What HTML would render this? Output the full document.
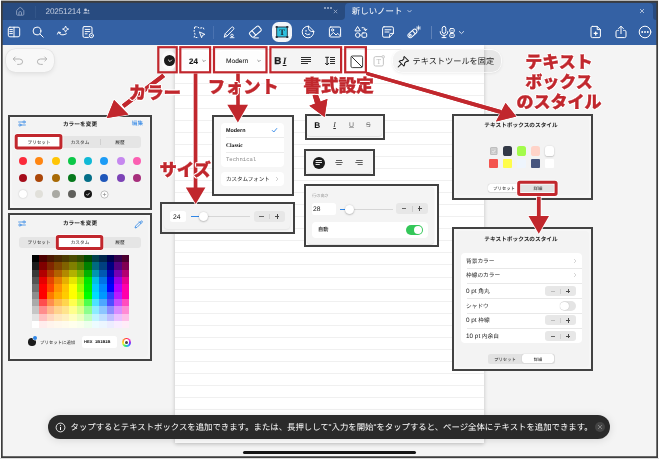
<!DOCTYPE html>
<html lang="ja"><head><meta charset="utf-8"><title>テキストツール</title>
<style>
html,body{margin:0;padding:0}
body{width:659px;height:459px;position:relative;overflow:hidden;background:#f2f2f2;font-family:"Liberation Sans","Noto Sans CJK JP",sans-serif;}
#L{position:absolute;left:0;top:0;width:659px;height:459px;will-change:transform}
#L>div,#L>svg{position:absolute;box-sizing:content-box}
.t{white-space:nowrap}
body{text-rendering:geometricPrecision}
</style></head><body><div id="L">
<div style="left:1px;top:0px;width:658px;height:1px;background:#b8b8b8;"></div>
<div style="left:0px;top:0px;width:1px;height:459px;background:#fbfbfb;"></div>
<div style="left:658px;top:0px;width:1px;height:459px;background:#fbfbfb;"></div>
<div style="left:2px;top:2px;width:655px;height:455px;background:#f4f4f4;"></div>
<div style="left:175px;top:45px;width:308.5px;height:397.6px;background:#fff;box-shadow:0 1px 4px rgba(0,0,0,.22);overflow:hidden;"><div style="position:absolute;left:0;top:38.4px;width:100%;height:1px;background:#f0f0f0"></div><div style="position:absolute;left:0;top:50.47px;width:100%;height:1px;background:#f0f0f0"></div><div style="position:absolute;left:0;top:62.54px;width:100%;height:1px;background:#f0f0f0"></div><div style="position:absolute;left:0;top:74.61px;width:100%;height:1px;background:#f0f0f0"></div><div style="position:absolute;left:0;top:86.68px;width:100%;height:1px;background:#f0f0f0"></div><div style="position:absolute;left:0;top:98.75px;width:100%;height:1px;background:#f0f0f0"></div><div style="position:absolute;left:0;top:110.82px;width:100%;height:1px;background:#f0f0f0"></div><div style="position:absolute;left:0;top:122.89px;width:100%;height:1px;background:#f0f0f0"></div><div style="position:absolute;left:0;top:134.96px;width:100%;height:1px;background:#f0f0f0"></div><div style="position:absolute;left:0;top:147.03px;width:100%;height:1px;background:#f0f0f0"></div><div style="position:absolute;left:0;top:159.1px;width:100%;height:1px;background:#f0f0f0"></div><div style="position:absolute;left:0;top:171.17px;width:100%;height:1px;background:#f0f0f0"></div><div style="position:absolute;left:0;top:183.24px;width:100%;height:1px;background:#f0f0f0"></div><div style="position:absolute;left:0;top:195.31px;width:100%;height:1px;background:#f0f0f0"></div><div style="position:absolute;left:0;top:207.38px;width:100%;height:1px;background:#f0f0f0"></div><div style="position:absolute;left:0;top:219.45px;width:100%;height:1px;background:#f0f0f0"></div><div style="position:absolute;left:0;top:231.52px;width:100%;height:1px;background:#f0f0f0"></div><div style="position:absolute;left:0;top:243.59px;width:100%;height:1px;background:#f0f0f0"></div><div style="position:absolute;left:0;top:255.66px;width:100%;height:1px;background:#f0f0f0"></div><div style="position:absolute;left:0;top:267.73px;width:100%;height:1px;background:#f0f0f0"></div><div style="position:absolute;left:0;top:279.8px;width:100%;height:1px;background:#f0f0f0"></div><div style="position:absolute;left:0;top:291.87px;width:100%;height:1px;background:#f0f0f0"></div><div style="position:absolute;left:0;top:303.94px;width:100%;height:1px;background:#f0f0f0"></div><div style="position:absolute;left:0;top:316.01px;width:100%;height:1px;background:#f0f0f0"></div><div style="position:absolute;left:0;top:328.08px;width:100%;height:1px;background:#f0f0f0"></div><div style="position:absolute;left:0;top:340.15px;width:100%;height:1px;background:#f0f0f0"></div><div style="position:absolute;left:0;top:352.22px;width:100%;height:1px;background:#f0f0f0"></div><div style="position:absolute;left:0;top:364.29px;width:100%;height:1px;background:#f0f0f0"></div><div style="position:absolute;left:0;top:376.36px;width:100%;height:1px;background:#f0f0f0"></div><div style="position:absolute;left:0;top:388.43px;width:100%;height:1px;background:#f0f0f0"></div></div>
<div style="left:175px;top:48.6px;width:308.5px;height:1px;background:#e9e9e9;"></div>
<div style="left:2px;top:2px;width:655px;height:18px;background:#284b80;"></div>
<div style="left:345px;top:3px;width:308px;height:20px;background:#3461a4;border-radius:4px 4px 0 0;"></div>
<div style="left:2px;top:20px;width:655px;height:25px;background:#3461a4;"></div>
<div style="left:341px;top:16px;width:4px;height:4px;background:#3461a4;"></div>
<div style="left:340px;top:15px;width:5px;height:5px;background:#284b80;border-radius:0 0 4px 0;"></div>
<div style="left:653px;top:16px;width:4px;height:4px;background:#3461a4;"></div>
<div style="left:653px;top:15px;width:4px;height:5px;background:#284b80;border-radius:0 0 0 3px;"></div>
<svg style="left:15px;top:5.8px;" width="11" height="11" viewBox="0 0 11 11"><path d="M1.6 4.9 Q1.6 4.3 2.1 3.9 L4.6 1.7 Q5.2 1.2 5.8 1.7 L8.3 3.9 Q8.8 4.3 8.8 4.9 V8.2 Q8.8 9.2 7.8 9.2 H2.6 Q1.6 9.2 1.6 8.2 Z M3.9 9.1 V6.6 Q3.9 5.6 5.2 5.6 Q6.5 5.6 6.5 6.6 V9.1" fill="none" stroke="#8fa1c2" stroke-width=".9" stroke-linejoin="round"/></svg>
<div style="left:35px;top:5.5px;width:1px;height:12px;background:#335689;"></div>
<div class="t" style="left:45.6px;top:6.06px;font-size:8.2px;line-height:11.48px;color:#c3cde0;letter-spacing:-.18px;">20251214</div>
<svg style="left:83.2px;top:8.4px;" width="6.8" height="6" viewBox="0 0 8 7"><circle cx="3" cy="2.2" r="1.6" fill="#c3cde0"/><path d="M0.3 6.5 C0.3 4.5 5.7 4.5 5.7 6.5 Z" fill="#c3cde0"/><circle cx="6.3" cy="3" r="1" fill="#c3cde0"/><path d="M5.6 6.5 C5.9 5 7.8 5 7.8 6.5Z" fill="#c3cde0"/></svg>
<div style="left:324.3px;top:7.4px;width:2px;height:2px;background:#a9b8d3;border-radius:50%;"></div>
<div style="left:327.2px;top:7.4px;width:2px;height:2px;background:#a9b8d3;border-radius:50%;"></div>
<div style="left:330.1px;top:7.4px;width:2px;height:2px;background:#a9b8d3;border-radius:50%;"></div>
<svg style="left:333px;top:8.5px;" width="5" height="5" viewBox="0 0 5 5"><path d="M0.8 0.8 L4.2 4.2 M4.2 0.8 L0.8 4.2" stroke="#9fb0cd" stroke-width=".8" fill="none"/></svg>
<div class="t" style="left:351.8px;top:6.19px;font-size:8.45px;line-height:11.83px;color:#fff;">新しいノート</div>
<svg style="left:405.8px;top:9.2px;" width="7" height="5" viewBox="0 0 7 5"><path d="M1.6 1.2 L3.5 3.1 L5.4 1.2" stroke="#c9d4e8" stroke-width=".9" fill="none"/></svg>
<svg style="left:639px;top:8px;" width="6" height="6" viewBox="0 0 6 6"><path d="M1 1 L5 5 M5 1 L1 5" stroke="#c9d4e8" stroke-width=".8" fill="none"/></svg>
<svg style="left:6.5px;top:25.3px;" width="14" height="14" viewBox="0 0 14 14"><rect x="1.3" y="2.2" width="11.4" height="9.6" rx="1.6" stroke="#fff" stroke-width="1" fill="none" stroke-linecap="round" stroke-linejoin="round"/><path d="M7 2.2 V11.8 M2.8 4.6 H5.4 M2.8 6.6 H5.4 M2.8 8.6 H5.4" stroke="#fff" stroke-width="1" fill="none" stroke-linecap="round" stroke-linejoin="round"/></svg>
<svg style="left:31.0px;top:25.3px;" width="14" height="14" viewBox="0 0 14 14"><circle cx="6" cy="6" r="3.9" stroke="#fff" stroke-width="1" fill="none" stroke-linecap="round" stroke-linejoin="round"/><path d="M9 9 L12.2 12.2" stroke="#fff" stroke-width="1" fill="none" stroke-linecap="round" stroke-linejoin="round"/></svg>
<svg style="left:56.0px;top:25.3px;" width="14" height="14" viewBox="0 0 14 14"><path d="M2.7 7.4 Q5 11.8 10.4 8.8" stroke="#fff" stroke-width="1" fill="none" stroke-linecap="round" stroke-linejoin="round"/><path d="M1.5 9.1 L2.5 6.9 L4.6 7.7" stroke="#fff" stroke-width="1" fill="none" stroke-linecap="round" stroke-linejoin="round"/><path d="M9.6 1 L10.5 3.2 L12.7 4.1 L10.5 5 L9.6 7.2 L8.7 5 L6.5 4.1 L8.7 3.2 Z" stroke="#fff" stroke-width=".85" fill="none" stroke-linejoin="round"/></svg>
<svg style="left:81.0px;top:25.3px;" width="14" height="14" viewBox="0 0 14 14"><path d="M3 1.6 H9.6 Q11 1.6 11 3 V7.6 M3 1.6 Q2 1.6 2 3 V11 Q2 12.4 3.4 12.4 H7.4" stroke="#fff" stroke-width="1" fill="none" stroke-linecap="round" stroke-linejoin="round"/><path d="M4.2 4.4 H8.8 M4.2 6.6 H8.8 M4.2 8.8 H6.2" stroke="#fff" stroke-width="1" fill="none" stroke-linecap="round" stroke-linejoin="round"/><circle cx="10.4" cy="10.6" r="2.1" stroke="#fff" stroke-width="1" fill="none" stroke-linecap="round" stroke-linejoin="round"/><circle cx="10.4" cy="10.6" r=".7" fill="#fff"/></svg>
<svg style="left:192px;top:25.3px;" width="14" height="14" viewBox="0 0 14 14"><path d="M2.7 2 L5.1 1.7 L7.5 3.2 L11.2 2.6 L12.4 5.2 M2.7 2 L2.1 6.2 L3 9.3 L2.1 12.3 L6.6 12.7" stroke="#fff" stroke-width="1" fill="none" stroke-dasharray="1.9 1.1" stroke-linejoin="round"/><path d="M7.4 6.9 L12.9 9.4 L10.5 10.3 L9.6 12.7 Z" stroke="#fff" stroke-width=".95" fill="none" stroke-linejoin="round"/></svg>
<div style="left:213.4px;top:25.5px;width:0.8px;height:13.5px;background:#4b73b1;"></div>
<svg style="left:221.5px;top:25.3px;" width="14" height="14" viewBox="0 0 14 14"><path d="M2.3 11.9 L3.2 8.7 L9.5 2.3 Q10.4 1.5 11.4 2.4 Q12.3 3.4 11.5 4.3 L5.1 10.9 Z" stroke="#fff" stroke-width="1" fill="none" stroke-linecap="round" stroke-linejoin="round"/><path d="M3.2 8.7 L5.1 10.9" stroke="#fff" stroke-width=".8" fill="none"/><circle cx="10" cy="10.4" r="1.25" stroke="#fff" stroke-width=".9" fill="none"/><path d="M8.2 12.7 H12" stroke="#fff" stroke-width=".9" fill="none" stroke-linecap="round"/></svg>
<svg style="left:248px;top:25px;" width="15" height="14" viewBox="0 0 15 14"><g transform="rotate(-40 7.3 6.6)"><rect x="1.3" y="3.7" width="12" height="5.9" rx="1.5" stroke="#fff" stroke-width="1" fill="none" stroke-linecap="round" stroke-linejoin="round"/><path d="M5.4 3.7 V9.6" stroke="#fff" stroke-width="1" fill="none" stroke-linecap="round" stroke-linejoin="round"/></g><path d="M6 12.9 H10.4" stroke="#fff" stroke-width="1" fill="none" stroke-linecap="round" stroke-linejoin="round"/></svg>
<div style="left:272.2px;top:21.9px;width:19.5px;height:20.5px;background:#f0f4f9;border-radius:6.5px;"></div>
<svg style="left:275.2px;top:25.3px;" width="14" height="14" viewBox="0 0 14 14"><rect x="1.7" y="2" width="10.6" height="10" fill="#2fc0de" stroke="#26303a" stroke-width=".9"/><g fill="#26303a"><rect x=".7" y="1" width="2" height="2"/><rect x="11.3" y="1" width="2" height="2"/><rect x=".7" y="11" width="2" height="2"/><rect x="11.3" y="11" width="2" height="2"/></g><text x="7" y="10.2" font-family="Liberation Serif,serif" font-weight="bold" font-size="8.6" text-anchor="middle" fill="#1d2730">T</text></svg>
<svg style="left:301.4px;top:25.2px;" width="14" height="14" viewBox="0 0 14 14"><path d="M7.4 1.2 A5.8 5.8 0 1 0 12.8 6.6 Z" stroke="#fff" stroke-width="1" fill="none" stroke-linecap="round" stroke-linejoin="round"/><path d="M7.4 1.2 Q6.6 7.4 12.8 6.6" stroke="#fff" stroke-width="1" fill="none" stroke-linecap="round" stroke-linejoin="round"/><path d="M4.3 8.5 Q6.2 10.7 8.8 9.2" stroke="#fff" stroke-width="1" fill="none" stroke-linecap="round" stroke-linejoin="round"/><path d="M4.6 5.9 H5.6" stroke="#fff" stroke-width="1" fill="none" stroke-linecap="round" stroke-linejoin="round"/></svg>
<svg style="left:328.0px;top:25.3px;" width="14" height="14" viewBox="0 0 14 14"><rect x="1.4" y="2" width="11.2" height="10" rx="1.4" stroke="#fff" stroke-width="1" fill="none" stroke-linecap="round" stroke-linejoin="round"/><circle cx="4.6" cy="5" r="1.1" stroke="#fff" stroke-width="1" fill="none" stroke-linecap="round" stroke-linejoin="round"/><path d="M1.8 11 L5.4 7.4 L8 10 L9.8 8.4 L12.4 11" stroke="#fff" stroke-width="1" fill="none" stroke-linecap="round" stroke-linejoin="round"/></svg>
<svg style="left:354.0px;top:25.3px;" width="14" height="14" viewBox="0 0 14 14"><path d="M3.8 1.8 L6.3 5.9 H1.3 Z" stroke="#fff" stroke-width="1" fill="none" stroke-linecap="round" stroke-linejoin="round"/><path d="M8 2.7 Q11.7 2 11.5 5.4 M10 4.2 L11.5 5.8 L12.9 4.2" stroke="#fff" stroke-width="1" fill="none" stroke-linecap="round" stroke-linejoin="round"/><circle cx="3.8" cy="10.1" r="2.3" stroke="#fff" stroke-width="1" fill="none" stroke-linecap="round" stroke-linejoin="round"/><rect x="7.9" y="7.9" width="4.8" height="4.4" rx="1.1" stroke="#fff" stroke-width="1" fill="none" stroke-linecap="round" stroke-linejoin="round"/></svg>
<svg style="left:381.0px;top:25.3px;" width="14" height="14" viewBox="0 0 14 14"><path d="M3 1.8 H11 Q12.4 1.8 12.4 3.2 V8.4 L8.6 12.2 H3 Q1.6 12.2 1.6 10.8 V3.2 Q1.6 1.8 3 1.8 Z" stroke="#fff" stroke-width="1" fill="none" stroke-linecap="round" stroke-linejoin="round"/><path d="M12.4 8.4 H9.8 Q8.6 8.4 8.6 9.6 V12.2" stroke="#fff" stroke-width="1" fill="none" stroke-linecap="round" stroke-linejoin="round"/><path d="M4 4.8 H10 M4 7 H8" stroke="#fff" stroke-width="1" fill="none" stroke-linecap="round" stroke-linejoin="round"/></svg>
<svg style="left:407.0px;top:25.3px;" width="14" height="14" viewBox="0 0 14 14"><g transform="rotate(-42 5.4 8.4)"><rect x=".2" y="6.2" width="10.4" height="4.4" rx="2.2" stroke="#fff" stroke-width="1" fill="none" stroke-linecap="round" stroke-linejoin="round"/><circle cx="2.6" cy="8.4" r=".9" stroke="#fff" stroke-width="1" fill="none" stroke-linecap="round" stroke-linejoin="round"/><path d="M7.2 6.4 V10.4" stroke="#fff" stroke-width="1" fill="none" stroke-linecap="round" stroke-linejoin="round"/></g><path d="M11.5 .9 V5.1 M9.4 3 H13.6 M10.1 1.6 L12.9 4.4 M12.9 1.6 L10.1 4.4" stroke="#fff" stroke-width=".7" fill="none" stroke-linecap="round"/></svg>
<div style="left:431px;top:25.5px;width:1px;height:13px;background:#5f82b8;"></div>
<svg style="left:437.0px;top:25.3px;" width="14" height="14" viewBox="0 0 14 14"><rect x="5.2" y="1.4" width="3.6" height="7" rx="1.8" stroke="#fff" stroke-width="1" fill="none" stroke-linecap="round" stroke-linejoin="round"/><path d="M3.2 6.6 Q3.2 10.4 7 10.4 Q10.8 10.4 10.8 6.6 M7 10.4 V12.6 M5 12.6 H9" stroke="#fff" stroke-width="1" fill="none" stroke-linecap="round" stroke-linejoin="round"/></svg>
<svg style="left:449.3px;top:27.5px;" width="6" height="10" viewBox="0 0 6 10"><rect x=".8" y=".6" width="4.4" height="3.8" rx="1" stroke="#fff" stroke-width="1" fill="none" stroke-linecap="round" stroke-linejoin="round"/><rect x=".8" y="5.6" width="4.4" height="3.8" rx="1" stroke="#fff" stroke-width="1" fill="none" stroke-linecap="round" stroke-linejoin="round"/><circle cx="3" cy="2.5" r=".6" fill="#fff"/><circle cx="3" cy="7.5" r=".6" fill="#fff"/></svg>
<svg style="left:458px;top:30.3px;" width="7" height="5" viewBox="0 0 7 5"><path d="M1 1.2 L3.5 3.6 L6 1.2" stroke="#dfe6f2" stroke-width=".9" fill="none"/></svg>
<svg style="left:589.0px;top:25.3px;" width="14" height="14" viewBox="0 0 14 14"><path d="M3.4 1.4 H8.2 L11.4 4.6 V11.2 Q11.4 12.6 10 12.6 H3.4 Q2 12.6 2 11.2 V2.8 Q2 1.4 3.4 1.4 Z" stroke="#fff" stroke-width="1" fill="none" stroke-linecap="round" stroke-linejoin="round"/><path d="M8.2 1.4 V4.6 H11.4" stroke="#fff" stroke-width="1" fill="none" stroke-linecap="round" stroke-linejoin="round"/><path d="M6.7 6.4 V10.4 M4.7 8.4 H8.7" stroke="#fff" stroke-width="1.3" fill="none"/></svg>
<svg style="left:613.5px;top:25.3px;" width="14" height="14" viewBox="0 0 14 14"><path d="M4.4 5.4 H3.4 Q2 5.4 2 6.8 V11.2 Q2 12.6 3.4 12.6 H10.6 Q12 12.6 12 11.2 V6.8 Q12 5.4 10.6 5.4 H9.6" stroke="#fff" stroke-width="1" fill="none" stroke-linecap="round" stroke-linejoin="round"/><path d="M7 8.6 V1.4 M4.6 3.6 L7 1.2 L9.4 3.6" stroke="#fff" stroke-width="1" fill="none" stroke-linecap="round" stroke-linejoin="round"/></svg>
<svg style="left:638.0px;top:25.3px;" width="14" height="14" viewBox="0 0 14 14"><circle cx="7" cy="7" r="5.8" stroke="#fff" stroke-width="1" fill="none" stroke-linecap="round" stroke-linejoin="round"/><circle cx="4.2" cy="7" r=".95" fill="#fff"/><circle cx="7" cy="7" r=".95" fill="#fff"/><circle cx="9.8" cy="7" r=".95" fill="#fff"/></svg>
<div style="left:5.8px;top:49px;width:48.5px;height:23.3px;background:#f8f8f8;border-radius:9.5px;box-shadow:0 0 0 .6px #e2e2e2,0 2px 5px rgba(0,0,0,.09);"></div>
<svg style="left:12px;top:55.3px;" width="12" height="11" viewBox="0 0 12 11"><path d="M3.2 2 L1.2 4 L3.2 6 M1.4 4 H7.4 Q10.6 4 10.6 6.8 Q10.6 9.4 7.4 9.4 H5.6" stroke="#b3b3b3" stroke-width="1" fill="none" stroke-linecap="round" stroke-linejoin="round"/></svg>
<svg style="left:36px;top:55.3px;" width="12" height="11" viewBox="0 0 12 11"><path d="M8.8 2 L10.8 4 L8.8 6 M10.6 4 H4.6 Q1.4 4 1.4 6.8 Q1.4 9.4 4.6 9.4 H6.4" stroke="#b3b3b3" stroke-width="1" fill="none" stroke-linecap="round" stroke-linejoin="round"/></svg>
<div style="left:161.5px;top:50.5px;width:14px;height:19px;background:#fbfbfb;border-radius:7px;"></div>
<div style="left:182px;top:50.5px;width:27px;height:19px;background:#fdfdfd;border-radius:8px;"></div>
<div style="left:216px;top:50.5px;width:49px;height:19px;background:#fdfdfd;border-radius:8px;"></div>
<div style="left:271.6px;top:48.4px;width:68.4px;height:22.8px;background:#f4f4f4;border-radius:3px;"></div>
<div style="left:164px;top:55px;width:11px;height:11px;background:#1b1b1b;border-radius:50%;"></div>
<svg style="left:166.5px;top:59.1px;" width="6" height="4" viewBox="0 0 6 4"><path d="M1.4 1 L3 2.6 L4.6 1" stroke="#fff" stroke-width=".9" fill="none" stroke-linecap="round"/></svg>
<div class="t" style="left:189px;top:56.07px;font-size:7.9px;line-height:11.06px;font-weight:bold;color:#1b1b1b;-webkit-text-stroke:.15px #1b1b1b;">24</div>
<svg style="left:201.3px;top:59.4px;" width="6" height="4" viewBox="0 0 6 4"><path d="M1.4 1 L3 2.6 L4.6 1" stroke="#777" stroke-width=".8" fill="none"/></svg>
<div class="t" style="left:225.6px;top:56.18px;font-size:26.4px;line-height:36.96px;transform:scale(0.25);transform-origin:0 0;color:#111;-webkit-text-stroke:.15px #111;">Modern</div>
<svg style="left:256px;top:59.4px;" width="6" height="4" viewBox="0 0 6 4"><path d="M1.4 1 L3 2.6 L4.6 1" stroke="#777" stroke-width=".8" fill="none"/></svg>
<div class="t" style="left:274.3px;top:54.84px;font-size:9.8px;line-height:13.72px;font-weight:bold;color:#1b1b1b;-webkit-text-stroke:.3px #1b1b1b;">B</div>
<div class="t" style="left:282.7px;top:54.88px;font-size:9.6px;line-height:13.44px;font-style:italic;font-weight:bold;color:#1b1b1b;text-decoration:underline;text-decoration-thickness:.7px;text-underline-offset:.6px;font-family:'Liberation Serif',serif;">I</div>
<svg style="left:299.5px;top:56px;" width="12" height="10" viewBox="0 0 12 10"><path d="M.8 1.5 H11 M.8 3.5 H11 M.8 5.5 H11 M.8 7.5 H8" stroke="#2e2e2e" stroke-width="1" fill="none" shape-rendering="crispEdges"/></svg>
<svg style="left:323.5px;top:56px;" width="12" height="10" viewBox="0 0 12 10"><path d="M3.1 1.4 V8.8 M1.2 7 L3.1 9 L5 7 M1.2 1.3 H5" stroke="#1b1b1b" stroke-width="1" fill="none"/><path d="M6.4 1.5 H11.2 M6.4 3.5 H11.2 M6.4 5.5 H11.2 M6.4 7.5 H11.2" stroke="#2e2e2e" stroke-width="1" fill="none" shape-rendering="crispEdges"/></svg>
<svg style="left:349.7px;top:54.5px;" width="14" height="14" viewBox="0 0 14 14"><rect x="1" y="1" width="11.6" height="11.6" rx="1.4" stroke="#222" stroke-width=".85" fill="#fff"/><path d="M1.6 1.6 L12 12" stroke="#222" stroke-width=".95" fill="none"/></svg>
<svg style="left:372.5px;top:55px;" width="12" height="12" viewBox="0 0 12 12"><rect x="1" y="1.6" width="9.4" height="9.4" rx="1.6" stroke="#bdbdbd" stroke-width=".9" fill="none"/><text x="5.7" y="9.2" font-family="Liberation Serif,serif" font-size="7.5" text-anchor="middle" fill="#bdbdbd">T</text><circle cx="10.2" cy="1.8" r="1.3" fill="#f4f4f4" stroke="#bdbdbd" stroke-width=".7"/></svg>
<div style="left:393px;top:49.8px;width:108px;height:22px;background:rgba(0,0,0,.05);border-radius:9.5px;box-shadow:0 0 0 .8px rgba(255,255,255,.95),0 1px 3.5px rgba(0,0,0,.12);"></div>
<svg style="left:396.6px;top:54.6px;" width="13" height="13" viewBox="0 0 13 13"><path d="M7.2 1.5 L11.6 5.9 Q10.6 6.7 9.4 6.3 L7.6 8.1 Q8 9.9 6.8 11 L2.2 6.4 Q3.3 5.2 5.1 5.6 L6.9 3.8 Q6.4 2.5 7.2 1.5 Z M4.4 8.8 L1.2 12" stroke="#1e1e1e" stroke-width="1.05" fill="none" stroke-linejoin="round" stroke-linecap="round"/></svg>
<div class="t" style="left:412.5px;top:55.86px;font-size:8.2px;line-height:11.48px;color:#222;">テキストツールを固定</div>
<div style="left:8px;top:114.5px;width:140px;height:91.0px;border:2px solid #424242;background:#f6f6f6;"></div>
<div style="left:11.5px;top:118px;width:137px;height:88px;background:#f3f3f3;border-radius:4px;"></div>
<div class="t" style="left:-20px;top:119.91px;font-size:22.8px;line-height:31.92px;transform:scale(0.25);transform-origin:0 0;width:800px;text-align:center;font-weight:bold;color:#222;">カラーを変更</div>
<svg style="left:17.5px;top:120.3px;" width="8" height="7" viewBox="0 0 8 7"><path d="M.6 2 H4.8 M3.2 5 H7.4" stroke="#2f86e6" stroke-width=".75" fill="none" stroke-linecap="round"/><circle cx="6.1" cy="2" r="1.1" stroke="#2f86e6" stroke-width=".75" fill="none" stroke-linecap="round"/><circle cx="1.9" cy="5" r="1.1" stroke="#2f86e6" stroke-width=".75" fill="none" stroke-linecap="round"/></svg>
<div class="t" style="left:-57.5px;top:119.48px;font-size:22.4px;line-height:31.36px;transform:scale(0.25);transform-origin:0 0;width:800px;text-align:right;color:#2f86e6;">編集</div>
<div style="left:15.5px;top:135.7px;width:125.0px;height:12.300000000000011px;background:#e5e5e5;border-radius:3px;"></div>
<div style="left:16px;top:135.5px;width:45px;height:12.7px;background:#fff;"></div>
<div class="t" style="left:-61.5px;top:138.69px;font-size:18.6px;line-height:26.04px;transform:scale(0.25);transform-origin:0 0;width:800px;text-align:center;color:#222;">プリセット</div>
<div class="t" style="left:-20px;top:138.69px;font-size:18.6px;line-height:26.04px;transform:scale(0.25);transform-origin:0 0;width:800px;text-align:center;color:#222;">カスタム</div>
<div class="t" style="left:20px;top:138.69px;font-size:18.6px;line-height:26.04px;transform:scale(0.25);transform-origin:0 0;width:800px;text-align:center;color:#222;">履歴</div>
<div style="left:100px;top:138.7px;width:0.6px;height:6.300000000000011px;background:#cfcfcf;"></div>
<div style="left:19.0px;top:156.5px;width:8px;height:8px;background:#fb2b3b;border-radius:50%;"></div>
<div style="left:35.25px;top:156.5px;width:8px;height:8px;background:#ff8612;border-radius:50%;"></div>
<div style="left:51.5px;top:156.5px;width:8px;height:8px;background:#ffc505;border-radius:50%;"></div>
<div style="left:67.75px;top:156.5px;width:8px;height:8px;background:#0cc848;border-radius:50%;"></div>
<div style="left:84.0px;top:156.5px;width:8px;height:8px;background:#10b9d6;border-radius:50%;"></div>
<div style="left:100.25px;top:156.5px;width:8px;height:8px;background:#1d9cf6;border-radius:50%;"></div>
<div style="left:116.5px;top:156.5px;width:8px;height:8px;background:#c688ef;border-radius:50%;"></div>
<div style="left:132.75px;top:156.5px;width:8px;height:8px;background:#fb5fb2;border-radius:50%;"></div>
<div style="left:19.0px;top:174px;width:8px;height:8px;background:#a50d1a;border-radius:50%;"></div>
<div style="left:35.25px;top:174px;width:8px;height:8px;background:#ab4709;border-radius:50%;"></div>
<div style="left:51.5px;top:174px;width:8px;height:8px;background:#a86a05;border-radius:50%;"></div>
<div style="left:67.75px;top:174px;width:8px;height:8px;background:#06791c;border-radius:50%;"></div>
<div style="left:84.0px;top:174px;width:8px;height:8px;background:#056f88;border-radius:50%;"></div>
<div style="left:100.25px;top:174px;width:8px;height:8px;background:#1f57ba;border-radius:50%;"></div>
<div style="left:116.5px;top:174px;width:8px;height:8px;background:#7c43b6;border-radius:50%;"></div>
<div style="left:132.75px;top:174px;width:8px;height:8px;background:#a72f7c;border-radius:50%;"></div>
<div style="left:19.0px;top:190.2px;width:8px;height:8px;background:#ffffff;border-radius:50%;box-shadow:0 0 1.5px rgba(0,0,0,.25);"></div>
<div style="left:35.25px;top:190.2px;width:8px;height:8px;background:#e1e0da;border-radius:50%;"></div>
<div style="left:51.5px;top:190.2px;width:8px;height:8px;background:#a9a9a3;border-radius:50%;"></div>
<div style="left:67.75px;top:190.2px;width:8px;height:8px;background:#5f5f5b;border-radius:50%;"></div>
<div style="left:84.0px;top:190.2px;width:8px;height:8px;background:#161616;border-radius:50%;"></div>
<svg style="left:85px;top:191.2px;" width="6" height="6" viewBox="0 0 6 6"><path d="M1.4 3.1 L2.6 4.3 L4.7 1.8" stroke="#fff" stroke-width=".8" fill="none"/></svg>
<svg style="left:100px;top:190px;" width="9" height="9" viewBox="0 0 9 9"><circle cx="4.5" cy="4.5" r="3.6" stroke="#999" stroke-width=".6" fill="#fff"/><path d="M4.5 2.8 V6.2 M2.8 4.5 H6.2" stroke="#888" stroke-width=".6"/></svg>
<div style="left:7.7px;top:212.8px;width:140.20000000000002px;height:144.2px;border:2px solid #424242;background:#f6f6f6;"></div>
<div style="left:11.3px;top:216.2px;width:137px;height:141.2px;background:#f3f3f3;border-radius:4px;"></div>
<div class="t" style="left:-20px;top:219.41px;font-size:22.8px;line-height:31.92px;transform:scale(0.25);transform-origin:0 0;width:800px;text-align:center;font-weight:bold;color:#222;">カラーを変更</div>
<svg style="left:17.5px;top:220.4px;" width="8" height="7" viewBox="0 0 8 7"><path d="M.6 2 H4.8 M3.2 5 H7.4" stroke="#2f86e6" stroke-width=".75" fill="none" stroke-linecap="round"/><circle cx="6.1" cy="2" r="1.1" stroke="#2f86e6" stroke-width=".75" fill="none" stroke-linecap="round"/><circle cx="1.9" cy="5" r="1.1" stroke="#2f86e6" stroke-width=".75" fill="none" stroke-linecap="round"/></svg>
<svg style="left:134.2px;top:219.6px;" width="9" height="9" viewBox="0 0 9 9"><path d="M1 8 L1.6 6 L5.6 2 L7 3.4 L3 7.4 Z M5 1.6 L7.4 4 M6.2 1.8 Q7.4 .4 8.2 1.2 Q8.8 1.8 7.6 3" stroke="#2f86e6" stroke-width=".8" fill="none" stroke-linejoin="round"/></svg>
<div style="left:19px;top:237.2px;width:122px;height:10.800000000000011px;background:#e5e5e5;border-radius:3px;"></div>
<div style="left:57px;top:236.4px;width:45px;height:12.2px;background:#fff;"></div>
<div class="t" style="left:-61.2px;top:239.44px;font-size:18.6px;line-height:26.04px;transform:scale(0.25);transform-origin:0 0;width:800px;text-align:center;color:#222;">プリセット</div>
<div class="t" style="left:-20.2px;top:239.44px;font-size:18.6px;line-height:26.04px;transform:scale(0.25);transform-origin:0 0;width:800px;text-align:center;color:#222;">カスタム</div>
<div class="t" style="left:20.2px;top:239.44px;font-size:18.6px;line-height:26.04px;transform:scale(0.25);transform-origin:0 0;width:800px;text-align:center;color:#222;">履歴</div>
<svg style="left:31.5px;top:254.6px;shape-rendering:crispEdges;" width="97.3" height="73.3" viewBox="0 0 97.3 73.3"><rect x="0.0" y="0.0" width="7.53" height="7.37" fill="#000000"/><rect x="7.48" y="0.0" width="7.53" height="7.37" fill="#4c0000"/><rect x="14.95" y="0.0" width="7.53" height="7.37" fill="#4c1700"/><rect x="22.43" y="0.0" width="7.53" height="7.37" fill="#4c2a00"/><rect x="29.91" y="0.0" width="7.53" height="7.37" fill="#4c3b00"/><rect x="37.39" y="0.0" width="7.53" height="7.37" fill="#4c4c00"/><rect x="44.86" y="0.0" width="7.53" height="7.37" fill="#334c00"/><rect x="52.34" y="0.0" width="7.53" height="7.37" fill="#004c00"/><rect x="59.82" y="0.0" width="7.53" height="7.37" fill="#00404c"/><rect x="67.29" y="0.0" width="7.53" height="7.37" fill="#00264c"/><rect x="74.77" y="0.0" width="7.53" height="7.37" fill="#00004c"/><rect x="82.25" y="0.0" width="7.53" height="7.37" fill="#33004c"/><rect x="89.72" y="0.0" width="7.53" height="7.37" fill="#4c0030"/><rect x="0.0" y="7.32" width="7.53" height="7.37" fill="#1c1c1c"/><rect x="7.48" y="7.32" width="7.53" height="7.37" fill="#800000"/><rect x="14.95" y="7.32" width="7.53" height="7.37" fill="#802600"/><rect x="22.43" y="7.32" width="7.53" height="7.37" fill="#804600"/><rect x="29.91" y="7.32" width="7.53" height="7.37" fill="#806200"/><rect x="37.39" y="7.32" width="7.53" height="7.37" fill="#808000"/><rect x="44.86" y="7.32" width="7.53" height="7.37" fill="#558000"/><rect x="52.34" y="7.32" width="7.53" height="7.37" fill="#008000"/><rect x="59.82" y="7.32" width="7.53" height="7.37" fill="#006a80"/><rect x="67.29" y="7.32" width="7.53" height="7.37" fill="#004080"/><rect x="74.77" y="7.32" width="7.53" height="7.37" fill="#000080"/><rect x="82.25" y="7.32" width="7.53" height="7.37" fill="#550080"/><rect x="89.72" y="7.32" width="7.53" height="7.37" fill="#800051"/><rect x="0.0" y="14.64" width="7.53" height="7.37" fill="#393939"/><rect x="7.48" y="14.64" width="7.53" height="7.37" fill="#b20000"/><rect x="14.95" y="14.64" width="7.53" height="7.37" fill="#b23600"/><rect x="22.43" y="14.64" width="7.53" height="7.37" fill="#b26200"/><rect x="29.91" y="14.64" width="7.53" height="7.37" fill="#b28900"/><rect x="37.39" y="14.64" width="7.53" height="7.37" fill="#b2b200"/><rect x="44.86" y="14.64" width="7.53" height="7.37" fill="#77b200"/><rect x="52.34" y="14.64" width="7.53" height="7.37" fill="#00b200"/><rect x="59.82" y="14.64" width="7.53" height="7.37" fill="#0095b2"/><rect x="67.29" y="14.64" width="7.53" height="7.37" fill="#0059b2"/><rect x="74.77" y="14.64" width="7.53" height="7.37" fill="#0000b2"/><rect x="82.25" y="14.64" width="7.53" height="7.37" fill="#7700b2"/><rect x="89.72" y="14.64" width="7.53" height="7.37" fill="#b20071"/><rect x="0.0" y="21.96" width="7.53" height="7.37" fill="#555555"/><rect x="7.48" y="21.96" width="7.53" height="7.37" fill="#e60000"/><rect x="14.95" y="21.96" width="7.53" height="7.37" fill="#e64500"/><rect x="22.43" y="21.96" width="7.53" height="7.37" fill="#e67e00"/><rect x="29.91" y="21.96" width="7.53" height="7.37" fill="#e6b000"/><rect x="37.39" y="21.96" width="7.53" height="7.37" fill="#e6e600"/><rect x="44.86" y="21.96" width="7.53" height="7.37" fill="#99e600"/><rect x="52.34" y="21.96" width="7.53" height="7.37" fill="#00e600"/><rect x="59.82" y="21.96" width="7.53" height="7.37" fill="#00bfe6"/><rect x="67.29" y="21.96" width="7.53" height="7.37" fill="#0073e6"/><rect x="74.77" y="21.96" width="7.53" height="7.37" fill="#0000e6"/><rect x="82.25" y="21.96" width="7.53" height="7.37" fill="#9900e6"/><rect x="89.72" y="21.96" width="7.53" height="7.37" fill="#e60091"/><rect x="0.0" y="29.28" width="7.53" height="7.37" fill="#717171"/><rect x="7.48" y="29.28" width="7.53" height="7.37" fill="#ff0000"/><rect x="14.95" y="29.28" width="7.53" height="7.37" fill="#ff4a00"/><rect x="22.43" y="29.28" width="7.53" height="7.37" fill="#ff9300"/><rect x="29.91" y="29.28" width="7.53" height="7.37" fill="#ffc400"/><rect x="37.39" y="29.28" width="7.53" height="7.37" fill="#ffff00"/><rect x="44.86" y="29.28" width="7.53" height="7.37" fill="#9aff00"/><rect x="52.34" y="29.28" width="7.53" height="7.37" fill="#00f000"/><rect x="59.82" y="29.28" width="7.53" height="7.37" fill="#00ccff"/><rect x="67.29" y="29.28" width="7.53" height="7.37" fill="#0088ff"/><rect x="74.77" y="29.28" width="7.53" height="7.37" fill="#0000ff"/><rect x="82.25" y="29.28" width="7.53" height="7.37" fill="#b000ff"/><rect x="89.72" y="29.28" width="7.53" height="7.37" fill="#ff00a8"/><rect x="0.0" y="36.6" width="7.53" height="7.37" fill="#8e8e8e"/><rect x="7.48" y="36.6" width="7.53" height="7.37" fill="#ff0000"/><rect x="14.95" y="36.6" width="7.53" height="7.37" fill="#ff7a00"/><rect x="22.43" y="36.6" width="7.53" height="7.37" fill="#ffaa00"/><rect x="29.91" y="36.6" width="7.53" height="7.37" fill="#ffcc00"/><rect x="37.39" y="36.6" width="7.53" height="7.37" fill="#ffff00"/><rect x="44.86" y="36.6" width="7.53" height="7.37" fill="#c2ff00"/><rect x="52.34" y="36.6" width="7.53" height="7.37" fill="#00ff00"/><rect x="59.82" y="36.6" width="7.53" height="7.37" fill="#00ddff"/><rect x="67.29" y="36.6" width="7.53" height="7.37" fill="#0099ff"/><rect x="74.77" y="36.6" width="7.53" height="7.37" fill="#2b3cff"/><rect x="82.25" y="36.6" width="7.53" height="7.37" fill="#b81aff"/><rect x="89.72" y="36.6" width="7.53" height="7.37" fill="#ff00aa"/><rect x="0.0" y="43.92" width="7.53" height="7.37" fill="#aaaaaa"/><rect x="7.48" y="43.92" width="7.53" height="7.37" fill="#ff4d4d"/><rect x="14.95" y="43.92" width="7.53" height="7.37" fill="#ff8e4d"/><rect x="22.43" y="43.92" width="7.53" height="7.37" fill="#ffbb4d"/><rect x="29.91" y="43.92" width="7.53" height="7.37" fill="#ffd54d"/><rect x="37.39" y="43.92" width="7.53" height="7.37" fill="#ffff4d"/><rect x="44.86" y="43.92" width="7.53" height="7.37" fill="#c4ff4d"/><rect x="52.34" y="43.92" width="7.53" height="7.37" fill="#4dff4d"/><rect x="59.82" y="43.92" width="7.53" height="7.37" fill="#4de1ff"/><rect x="67.29" y="43.92" width="7.53" height="7.37" fill="#4da6ff"/><rect x="74.77" y="43.92" width="7.53" height="7.37" fill="#4d4dff"/><rect x="82.25" y="43.92" width="7.53" height="7.37" fill="#c44dff"/><rect x="89.72" y="43.92" width="7.53" height="7.37" fill="#ff4dbe"/><rect x="0.0" y="51.24" width="7.53" height="7.37" fill="#c6c6c6"/><rect x="7.48" y="51.24" width="7.53" height="7.37" fill="#ff8c8c"/><rect x="14.95" y="51.24" width="7.53" height="7.37" fill="#ffb68c"/><rect x="22.43" y="51.24" width="7.53" height="7.37" fill="#ffd38c"/><rect x="29.91" y="51.24" width="7.53" height="7.37" fill="#ffe48c"/><rect x="37.39" y="51.24" width="7.53" height="7.37" fill="#ffff8c"/><rect x="44.86" y="51.24" width="7.53" height="7.37" fill="#d9ff8c"/><rect x="52.34" y="51.24" width="7.53" height="7.37" fill="#8cff8c"/><rect x="59.82" y="51.24" width="7.53" height="7.37" fill="#8cecff"/><rect x="67.29" y="51.24" width="7.53" height="7.37" fill="#8cc6ff"/><rect x="74.77" y="51.24" width="7.53" height="7.37" fill="#8c8cff"/><rect x="82.25" y="51.24" width="7.53" height="7.37" fill="#d98cff"/><rect x="89.72" y="51.24" width="7.53" height="7.37" fill="#ff8cd5"/><rect x="0.0" y="58.56" width="7.53" height="7.37" fill="#e3e3e3"/><rect x="7.48" y="58.56" width="7.53" height="7.37" fill="#ffbfbf"/><rect x="14.95" y="58.56" width="7.53" height="7.37" fill="#ffd7bf"/><rect x="22.43" y="58.56" width="7.53" height="7.37" fill="#ffe7bf"/><rect x="29.91" y="58.56" width="7.53" height="7.37" fill="#fff0bf"/><rect x="37.39" y="58.56" width="7.53" height="7.37" fill="#ffffbf"/><rect x="44.86" y="58.56" width="7.53" height="7.37" fill="#eaffbf"/><rect x="52.34" y="58.56" width="7.53" height="7.37" fill="#bfffbf"/><rect x="59.82" y="58.56" width="7.53" height="7.37" fill="#bff4ff"/><rect x="67.29" y="58.56" width="7.53" height="7.37" fill="#bfdfff"/><rect x="74.77" y="58.56" width="7.53" height="7.37" fill="#bfbfff"/><rect x="82.25" y="58.56" width="7.53" height="7.37" fill="#eabfff"/><rect x="89.72" y="58.56" width="7.53" height="7.37" fill="#ffbfe8"/><rect x="0.0" y="65.88" width="7.53" height="7.37" fill="#ffffff"/><rect x="7.48" y="65.88" width="7.53" height="7.37" fill="#ffeded"/><rect x="14.95" y="65.88" width="7.53" height="7.37" fill="#fff4ed"/><rect x="22.43" y="65.88" width="7.53" height="7.37" fill="#fff8ed"/><rect x="29.91" y="65.88" width="7.53" height="7.37" fill="#fffbed"/><rect x="37.39" y="65.88" width="7.53" height="7.37" fill="#ffffed"/><rect x="44.86" y="65.88" width="7.53" height="7.37" fill="#f9ffed"/><rect x="52.34" y="65.88" width="7.53" height="7.37" fill="#edffed"/><rect x="59.82" y="65.88" width="7.53" height="7.37" fill="#edfcff"/><rect x="67.29" y="65.88" width="7.53" height="7.37" fill="#edf6ff"/><rect x="74.77" y="65.88" width="7.53" height="7.37" fill="#ededff"/><rect x="82.25" y="65.88" width="7.53" height="7.37" fill="#f9edff"/><rect x="89.72" y="65.88" width="7.53" height="7.37" fill="#ffedf8"/></svg>
<div style="left:28.3px;top:338px;width:7.6px;height:7.6px;background:#1b1b1b;border-radius:50%;"></div>
<div style="left:33px;top:335.9px;width:3.8px;height:3.8px;background:#2f86e6;border-radius:50%;box-shadow:0 0 0 .6px #f3f3f3;"></div>
<div class="t" style="left:40px;top:338.92px;font-size:17.6px;line-height:24.64px;transform:scale(0.25);transform-origin:0 0;color:#222;">プリセットに追加</div>
<div style="left:82px;top:335.7px;width:34.7px;height:12.8px;background:#fff;border-radius:2.5px;"></div>
<div class="t" style="left:84.2px;top:339.33px;font-size:16.4px;line-height:22.96px;transform:scale(0.25);transform-origin:0 0;color:#111;font-weight:bold;">HEX</div>
<div class="t" style="left:95px;top:339.33px;font-size:16.4px;line-height:22.96px;transform:scale(0.25);transform-origin:0 0;color:#111;font-weight:bold;letter-spacing:-.15px;">1B1B1B</div>
<div style="left:121.8px;top:337.6px;width:9px;height:9px;border-radius:50%;background:conic-gradient(#f33,#f3c,#63f,#3af,#3e6,#fe3,#f93,#f33);"></div>
<div style="left:123.5px;top:339.3px;width:5.6px;height:5.6px;background:#fff;border-radius:50%;"></div>
<div style="left:124.8px;top:340.6px;width:3px;height:3px;background:#444;border-radius:50%;"></div>
<div style="left:212.4px;top:115px;width:77.29999999999998px;height:76.5px;border:2px solid #424242;background:#f6f6f6;"></div>
<div style="left:221px;top:122.7px;width:63.4px;height:44.3px;background:#fff;border-radius:4px;"></div>
<div class="t" style="left:226px;top:126.22px;font-size:21.6px;line-height:30.24px;transform:scale(0.25);transform-origin:0 0;color:#111;font-weight:bold;">Modern</div>
<div class="t" style="left:226px;top:140.78px;font-size:22.4px;line-height:31.36px;transform:scale(0.25);transform-origin:0 0;color:#111;font-weight:bold;font-family:'Liberation Serif',serif;">Classic</div>
<div class="t" style="left:226px;top:156.08px;font-size:22.4px;line-height:31.36px;transform:scale(0.25);transform-origin:0 0;color:#8a8a8a;font-family:'Liberation Mono',monospace;">Technical</div>
<div style="left:226px;top:137.4px;width:58.4px;height:0.6px;background:#ececec;"></div>
<div style="left:226px;top:152.2px;width:58.4px;height:0.6px;background:#ececec;"></div>
<svg style="left:271px;top:127.2px;" width="7" height="6" viewBox="0 0 7 6"><path d="M1 3.2 L2.8 5 L6 1.2" stroke="#2f86e6" stroke-width=".9" fill="none"/></svg>
<div style="left:221px;top:172px;width:63.4px;height:13.8px;background:#fff;border-radius:4px;"></div>
<div class="t" style="left:226px;top:175.15px;font-size:22.0px;line-height:30.8px;transform:scale(0.25);transform-origin:0 0;color:#111;">カスタムフォント</div>
<svg style="left:275.4px;top:176.4px;" width="4" height="6" viewBox="0 0 4 6"><path d="M1 1 L3 3 L1 5" stroke="#bbb" stroke-width=".7" fill="none"/></svg>
<div style="left:160px;top:202.3px;width:130.7px;height:27.899999999999977px;border:2px solid #424242;background:#f6f6f6;"></div>
<div style="left:163.8px;top:205.2px;width:126.6px;height:23.4px;background:#f3f3f3;border-radius:4px;box-shadow:0 1px 2px rgba(0,0,0,.08);"></div>
<div style="left:162px;top:229.6px;width:13px;height:2.6px;background:#ececec;"></div>
<div style="left:169.9px;top:211.3px;width:16.4px;height:11.2px;background:#fff;border-radius:2.5px;"></div>
<div class="t" style="left:173.4px;top:211.91px;font-size:26.8px;line-height:37.52px;transform:scale(0.25);transform-origin:0 0;color:#111;">24</div>
<div style="left:190.5px;top:216.2px;width:59.5px;height:0.8px;background:#d6d6d6;"></div>
<div style="left:190.5px;top:216px;width:11px;height:1.2px;background:#2f86e6;"></div>
<div style="left:199.2px;top:212.1px;width:9px;height:9px;background:#fff;border-radius:50%;box-shadow:0 .5px 2px rgba(0,0,0,.35);"></div>
<div style="left:253.6px;top:211.4px;width:31.200000000000017px;height:10.5px;background:#e7e7e7;border-radius:3px;"></div>
<div style="left:268.9px;top:213.9px;width:0.6px;height:5.5px;background:#cfcfcf;"></div>
<div style="left:259.2px;top:216.25px;width:4.4px;height:0.8px;background:#666;"></div>
<div style="left:274.8px;top:216.25px;width:4.4px;height:0.8px;background:#4a4a4a;"></div>
<div style="left:276.6px;top:214.45px;width:0.8px;height:4.4px;background:#4a4a4a;"></div>
<div style="left:304.5px;top:113.8px;width:76.30000000000001px;height:22.60000000000001px;border:2px solid #424242;background:#fdfdfd;"></div>
<div style="left:306.8px;top:115.8px;width:75.4px;height:20.4px;background:#f4f4f4;border-radius:3.5px;box-shadow:0 .5px 1.5px rgba(0,0,0,.12);"></div>
<div class="t" style="left:314.2px;top:119.59px;font-size:8.3px;line-height:11.62px;font-weight:bold;color:#111;">B</div>
<div class="t" style="left:333.3px;top:119.94px;font-size:7.8px;line-height:10.92px;font-style:italic;color:#333;text-decoration:underline;font-family:'Liberation Serif',serif;">I</div>
<div class="t" style="left:348.8px;top:119.77px;font-size:27.6px;line-height:38.64px;transform:scale(0.25);transform-origin:0 0;color:#666;text-decoration:underline;">U</div>
<div class="t" style="left:366.1px;top:119.77px;font-size:27.6px;line-height:38.64px;transform:scale(0.25);transform-origin:0 0;color:#666;text-decoration:line-through;">S</div>
<div style="left:304.1px;top:149.4px;width:66.79999999999995px;height:22.299999999999983px;border:2px solid #424242;background:#fdfdfd;"></div>
<div style="left:306.2px;top:151.3px;width:66.2px;height:21.8px;background:#f4f4f4;border-radius:3.5px;box-shadow:0 .5px 1.5px rgba(0,0,0,.12);"></div>
<div style="left:312.5px;top:156.6px;width:12.4px;height:12.4px;background:#1b1b1b;border-radius:50%;"></div>
<svg style="left:315px;top:160px;" width="8" height="7" viewBox="0 0 8 7"><path d="M.6 .5 H6.8 M.6 2.5 H7 M.6 4.5 H4.8" stroke="#fff" stroke-width=".9" fill="none"/></svg>
<svg style="left:335px;top:160px;" width="8" height="7" viewBox="0 0 8 7"><path d="M1 .5 H7 M.3 2.5 H7.7 M1.4 4.5 H6.6" stroke="#444" stroke-width=".85" fill="none"/></svg>
<svg style="left:355px;top:160px;" width="8" height="7" viewBox="0 0 8 7"><path d="M1.2 .5 H7.7 M.3 2.5 H7.7 M2.6 4.5 H7.7" stroke="#444" stroke-width=".85" fill="none"/></svg>
<div style="left:304px;top:184.4px;width:131px;height:58.79999999999998px;border:2px solid #424242;background:#fdfdfd;"></div>
<div style="left:306.6px;top:187px;width:127.2px;height:56.8px;background:#f4f4f4;border-radius:4px;box-shadow:0 .5px 1.5px rgba(0,0,0,.12);"></div>
<div class="t" style="left:312.2px;top:193.06px;font-size:16.8px;line-height:23.52px;transform:scale(0.25);transform-origin:0 0;color:#999;">行の高さ</div>
<div style="left:312.1px;top:203.1px;width:24.2px;height:11.7px;background:#fff;border-radius:2.5px;"></div>
<div class="t" style="left:313.3px;top:204.01px;font-size:26.8px;line-height:37.52px;transform:scale(0.25);transform-origin:0 0;color:#111;">28</div>
<div style="left:339.6px;top:208.7px;width:53.2px;height:0.8px;background:#d6d6d6;"></div>
<div style="left:339.6px;top:208.5px;width:6.5px;height:1.3px;background:#2f86e6;"></div>
<div style="left:345.1px;top:204.5px;width:9.2px;height:9.2px;background:#fff;border-radius:50%;box-shadow:0 .5px 2px rgba(0,0,0,.35);"></div>
<div style="left:396.1px;top:203.1px;width:31.5px;height:11.0px;background:#e7e7e7;border-radius:3px;"></div>
<div style="left:411.55px;top:205.6px;width:0.6px;height:6.0px;background:#cfcfcf;"></div>
<div style="left:401.78px;top:208.2px;width:4.4px;height:0.8px;background:#666;"></div>
<div style="left:417.53px;top:208.2px;width:4.4px;height:0.8px;background:#4a4a4a;"></div>
<div style="left:419.33px;top:206.4px;width:0.8px;height:4.4px;background:#4a4a4a;"></div>
<div style="left:312.1px;top:222.2px;width:115.5px;height:15.4px;background:#fff;border-radius:4px;"></div>
<div class="t" style="left:317.6px;top:226.06px;font-size:20.8px;line-height:29.12px;transform:scale(0.25);transform-origin:0 0;color:#111;font-weight:500;">自動</div>
<div style="left:406px;top:225.1px;width:17.2px;height:9.9px;background:#34c759;border-radius:5px;"></div>
<div style="left:414.2px;top:225.9px;width:8.3px;height:8.3px;background:#fff;border-radius:50%;"></div>
<div style="left:452.3px;top:113.7px;width:136.3px;height:81.89999999999999px;border:2px solid #424242;background:#f6f6f6;"></div>
<div style="left:456.2px;top:117.4px;width:132.6px;height:78px;background:#f3f3f3;border-radius:4px;"></div>
<div class="t" style="left:421.3px;top:121.05px;font-size:22.6px;line-height:31.64px;transform:scale(0.25);transform-origin:0 0;width:800px;text-align:center;font-weight:bold;color:#222;letter-spacing:.05px;">テキストボックスのスタイル</div>
<svg style="left:489.8px;top:147.2px;" width="8" height="8" viewBox="0 0 8 8"><rect x=".5" y=".5" width="6.6" height="7.2" rx=".8" fill="#c9c9c9" stroke="#a8a8a8" stroke-width=".6"/><path d="M1.2 2 H6.4 M1.2 6.4 H6.4" stroke="#e6e6e6" stroke-width=".5"/><path d="M2.4 4.4 L3.4 5.2 L5.2 3.2" stroke="#fff" stroke-width=".8" fill="none"/></svg>
<div style="left:502.9px;top:146.4px;width:9.2px;height:9.2px;background:#333947;border-radius:2.6px;"></div>
<div style="left:516.6999999999999px;top:146.4px;width:9.2px;height:9.2px;background:#a3fb4b;border-radius:2.6px;"></div>
<div style="left:530.5px;top:146.4px;width:9.2px;height:9.2px;background:#ffd3c8;border-radius:2.6px;"></div>
<div style="left:544.6px;top:146.4px;width:9.2px;height:9.2px;background:#ffffff;border-radius:2.6px;box-shadow:0 .5px 1.5px rgba(0,0,0,.3);"></div>
<div style="left:488.79999999999995px;top:159px;width:9.2px;height:9.2px;background:#f4544f;border-radius:1px;"></div>
<div style="left:502.9px;top:159px;width:9.2px;height:9.2px;background:#fffd4a;border-radius:1px;"></div>
<div style="left:516.6999999999999px;top:159px;width:9.2px;height:9.2px;background:#eef5fd;border-radius:1px;"></div>
<div style="left:530.5px;top:159px;width:9.2px;height:9.2px;background:#47557e;border-radius:1px;"></div>
<div style="left:544.6px;top:159px;width:9.2px;height:9.2px;background:#ffffff;border-radius:1px;"></div>
<div style="left:487.8px;top:183.7px;width:66.2px;height:9px;background:#e2e2e2;border-radius:2.5px;"></div>
<div style="left:488.3px;top:184.2px;width:32px;height:8px;background:#fff;border-radius:2.2px;box-shadow:0 0 1px rgba(0,0,0,.3);"></div>
<div class="t" style="left:404px;top:185.42px;font-size:17.6px;line-height:24.64px;transform:scale(0.25);transform-origin:0 0;width:800px;text-align:center;color:#222;">プリセット</div>
<div class="t" style="left:438px;top:185.42px;font-size:17.6px;line-height:24.64px;transform:scale(0.25);transform-origin:0 0;width:800px;text-align:center;color:#222;">詳細</div>
<div style="left:452px;top:227px;width:136.70000000000005px;height:139.8px;border:2px solid #424242;background:#f6f6f6;"></div>
<div style="left:455.6px;top:230.6px;width:133.5px;height:136.6px;background:#f3f3f3;border-radius:4px;"></div>
<div class="t" style="left:421.3px;top:235.24px;font-size:22.6px;line-height:31.64px;transform:scale(0.25);transform-origin:0 0;width:800px;text-align:center;font-weight:bold;color:#222;letter-spacing:.05px;">テキストボックスのスタイル</div>
<div style="left:460.8px;top:253px;width:121.4px;height:90px;background:#fff;border-radius:4px;"></div>
<div class="t" style="left:466.4px;top:256.81px;font-size:22.8px;line-height:31.92px;transform:scale(0.25);transform-origin:0 0;color:#222;">背景カラー</div>
<div class="t" style="left:466.4px;top:271.31px;font-size:22.8px;line-height:31.92px;transform:scale(0.25);transform-origin:0 0;color:#222;">枠線のカラー</div>
<div style="left:466.7px;top:268px;width:115.3px;height:0.6px;background:#e8e8e8;"></div>
<div class="t" style="left:466.4px;top:287.01px;font-size:22.8px;line-height:31.92px;transform:scale(0.25);transform-origin:0 0;color:#222;"><span style="font-size:1.12em">0 pt</span> 角丸</div>
<div style="left:466.7px;top:283px;width:115.3px;height:0.6px;background:#e8e8e8;"></div>
<div class="t" style="left:466.4px;top:301.91px;font-size:22.8px;line-height:31.92px;transform:scale(0.25);transform-origin:0 0;color:#222;">シャドウ</div>
<div style="left:466.7px;top:298px;width:115.3px;height:0.6px;background:#e8e8e8;"></div>
<div class="t" style="left:466.4px;top:316.41px;font-size:22.8px;line-height:31.92px;transform:scale(0.25);transform-origin:0 0;color:#222;"><span style="font-size:1.12em">0 pt</span> 枠線</div>
<div style="left:466.7px;top:313px;width:115.3px;height:0.6px;background:#e8e8e8;"></div>
<div class="t" style="left:466.4px;top:332.01px;font-size:22.8px;line-height:31.92px;transform:scale(0.25);transform-origin:0 0;color:#222;"><span style="font-size:1.12em">10 pt</span> 内余白</div>
<div style="left:466.7px;top:328px;width:115.3px;height:0.6px;background:#e8e8e8;"></div>
<svg style="left:573px;top:257.8px;" width="4" height="6" viewBox="0 0 4 6"><path d="M1 1 L3 3 L1 5" stroke="#c4c4c4" stroke-width=".7" fill="none"/></svg>
<svg style="left:573px;top:272.3px;" width="4" height="6" viewBox="0 0 4 6"><path d="M1 1 L3 3 L1 5" stroke="#c4c4c4" stroke-width=".7" fill="none"/></svg>
<div style="left:545px;top:286px;width:31px;height:10px;background:#e7e7e7;border-radius:3px;"></div>
<div style="left:560.2px;top:288.5px;width:0.6px;height:5px;background:#cfcfcf;"></div>
<div style="left:550.55px;top:290.6px;width:4.4px;height:0.8px;background:#bbb;"></div>
<div style="left:566.05px;top:290.6px;width:4.4px;height:0.8px;background:#4a4a4a;"></div>
<div style="left:567.85px;top:288.8px;width:0.8px;height:4.4px;background:#4a4a4a;"></div>
<div style="left:545px;top:315.4px;width:31px;height:10.0px;background:#e7e7e7;border-radius:3px;"></div>
<div style="left:560.2px;top:317.9px;width:0.6px;height:5.0px;background:#cfcfcf;"></div>
<div style="left:550.55px;top:320.0px;width:4.4px;height:0.8px;background:#bbb;"></div>
<div style="left:566.05px;top:320.0px;width:4.4px;height:0.8px;background:#4a4a4a;"></div>
<div style="left:567.85px;top:318.2px;width:0.8px;height:4.4px;background:#4a4a4a;"></div>
<div style="left:545px;top:331px;width:31px;height:10px;background:#e7e7e7;border-radius:3px;"></div>
<div style="left:560.2px;top:333.5px;width:0.6px;height:5px;background:#cfcfcf;"></div>
<div style="left:550.55px;top:335.6px;width:4.4px;height:0.8px;background:#666;"></div>
<div style="left:566.05px;top:335.6px;width:4.4px;height:0.8px;background:#4a4a4a;"></div>
<div style="left:567.85px;top:333.8px;width:0.8px;height:4.4px;background:#4a4a4a;"></div>
<div style="left:559.6px;top:300.9px;width:16.4px;height:10px;background:#e4e4e4;border-radius:5px;"></div>
<div style="left:560.4px;top:301.7px;width:8.4px;height:8.4px;background:#fff;border-radius:50%;box-shadow:0 0 1px rgba(0,0,0,.3);"></div>
<div style="left:487.8px;top:353.7px;width:67.2px;height:10.3px;background:#e2e2e2;border-radius:2.5px;"></div>
<div style="left:521.6px;top:354.3px;width:32.8px;height:9.1px;background:#fff;border-radius:2.2px;box-shadow:0 0 1px rgba(0,0,0,.3);"></div>
<div class="t" style="left:404.5px;top:355.89px;font-size:17.2px;line-height:24.08px;transform:scale(0.25);transform-origin:0 0;width:800px;text-align:center;color:#222;">プリセット</div>
<div class="t" style="left:438px;top:355.89px;font-size:17.2px;line-height:24.08px;transform:scale(0.25);transform-origin:0 0;width:800px;text-align:center;color:#222;">詳細</div>
<svg style="left:0px;top:0px;pointer-events:none;" width="659" height="459" viewBox="0 0 659 459">
<g fill="#c1272d" stroke="#fff" stroke-width="1.6" paint-order="stroke" stroke-linejoin="round">
<path d="M162.4 73.8 L165 77 L124.5 107.8 L121.9 104.6 Z"/>
<path d="M106.8 118 L114.1 99.9 L128.4 114.5 Z"/>
<path d="M193.7 73.4 H197.4 V187.4 H205.4 L195.7 204 L185.8 187.4 H193.7 Z"/>
<path d="M236.2 73.4 H239.8 V104.8 H248 L237.9 122.4 L227.3 104.8 H236.2 Z"/>
<path d="M312.6 95.2 L317.6 94 L321 102.6 L315.4 104.4 Z"/>
<path d="M309.4 105.7 L327.4 98.9 L324.6 117 Z"/>
<path d="M366.6 71.7 L366.2 75.1 L500.6 113.9 L501.8 110.3 Z"/>
<path d="M516.2 116.6 L505.6 103 L496 121.5 Z"/>
<path d="M536.9 196 H540.7 V216.1 H549 L538.8 233.7 L528.5 216.1 H536.9 Z"/>
</g>
<g fill="#c1272d" stroke="#fff" stroke-width="0" paint-order="stroke" stroke-linejoin="round">
<path d="M162.4 73.8 L165 77 L124.5 107.8 L121.9 104.6 Z"/>
<path d="M106.8 118 L114.1 99.9 L128.4 114.5 Z"/>
<path d="M312.6 95.2 L317.6 94 L321 102.6 L315.4 104.4 Z"/>
<path d="M309.4 105.7 L327.4 98.9 L324.6 117 Z"/>
<path d="M366.6 71.7 L366.2 75.1 L500.6 113.9 L501.8 110.3 Z"/>
<path d="M516.2 116.6 L505.6 103 L496 121.5 Z"/>
</g><rect x="158.3" y="47.2" width="18.4" height="25.1" rx="0" fill="none" stroke="#c1272d" stroke-width="2.2"/><rect x="180.3" y="47.2" width="29.8" height="25.1" rx="0" fill="none" stroke="#c1272d" stroke-width="2.2"/><rect x="214.0" y="47.2" width="52.5" height="25.1" rx="0" fill="none" stroke="#c1272d" stroke-width="2.2"/><rect x="270.4" y="47.2" width="70.7" height="25.1" rx="0" fill="none" stroke="#c1272d" stroke-width="2.2"/><rect x="345.2" y="47.2" width="20.7" height="25.1" rx="0" fill="none" stroke="#c1272d" stroke-width="2.2"/><rect x="14.3" y="133.7" width="48.5" height="16.1" rx="3.1" fill="none" stroke="#fff" stroke-width="0.8"/><rect x="18.1" y="137.5" width="40.9" height="8.5" rx="0" fill="none" stroke="#fff" stroke-width="0.8"/><rect x="16.2" y="135.6" width="44.7" height="12.3" rx="1.2" fill="none" stroke="#c1272d" stroke-width="3"/><rect x="55.4" y="234.6" width="48.3" height="15.7" rx="3.1" fill="none" stroke="#fff" stroke-width="0.8"/><rect x="59.2" y="238.4" width="40.7" height="8.1" rx="0" fill="none" stroke="#fff" stroke-width="0.8"/><rect x="57.3" y="236.5" width="44.5" height="11.9" rx="1.2" fill="none" stroke="#c1272d" stroke-width="3"/><rect x="516.8" y="180.3" width="41.2" height="16.1" rx="3.1" fill="none" stroke="#fff" stroke-width="0.8"/><rect x="520.6" y="184.1" width="33.6" height="8.5" rx="0" fill="none" stroke="#fff" stroke-width="0.8"/><rect x="518.7" y="182.2" width="37.4" height="12.3" rx="1.2" fill="none" stroke="#c1272d" stroke-width="3"/></svg>
<div class="t" style="left:128.8px;top:82.64px;font-size:17.6px;line-height:21.12px;color:#c1272d;font-weight:900;white-space:nowrap;-webkit-text-stroke:.35px #c1272d;text-shadow:1.1px 0 0 #fff,-1.1px 0 0 #fff,0 1.1px 0 #fff,0 -1.1px 0 #fff,.8px .8px 0 #fff,-.8px .8px 0 #fff,.8px -.8px 0 #fff,-.8px -.8px 0 #fff;letter-spacing:-.2px;">カラー</div>
<div class="t" style="left:207.7px;top:77.16px;font-size:17.4px;line-height:20.88px;color:#c1272d;font-weight:900;white-space:nowrap;-webkit-text-stroke:.35px #c1272d;text-shadow:1.1px 0 0 #fff,-1.1px 0 0 #fff,0 1.1px 0 #fff,0 -1.1px 0 #fff,.8px .8px 0 #fff,-.8px .8px 0 #fff,.8px -.8px 0 #fff,-.8px -.8px 0 #fff;letter-spacing:.45px;">フォント</div>
<div class="t" style="left:303.2px;top:75.86px;font-size:17.9px;line-height:21.48px;color:#c1272d;font-weight:900;white-space:nowrap;-webkit-text-stroke:.35px #c1272d;text-shadow:1.1px 0 0 #fff,-1.1px 0 0 #fff,0 1.1px 0 #fff,0 -1.1px 0 #fff,.8px .8px 0 #fff,-.8px .8px 0 #fff,.8px -.8px 0 #fff,-.8px -.8px 0 #fff;letter-spacing:-.25px;">書式設定</div>
<div class="t" style="left:159.6px;top:159.96px;font-size:17.4px;line-height:20.88px;color:#c1272d;font-weight:900;white-space:nowrap;-webkit-text-stroke:.35px #c1272d;text-shadow:1.1px 0 0 #fff,-1.1px 0 0 #fff,0 1.1px 0 #fff,0 -1.1px 0 #fff,.8px .8px 0 #fff,-.8px .8px 0 #fff,.8px -.8px 0 #fff,-.8px -.8px 0 #fff;letter-spacing:-.2px;">サイズ</div>
<div class="t" style="left:459px;width:200px;text-align:center;top:52.8px;font-size:17px;line-height:20px;color:#c1272d;font-weight:900;white-space:nowrap;-webkit-text-stroke:.35px #c1272d;text-shadow:1.1px 0 0 #fff,-1.1px 0 0 #fff,0 1.1px 0 #fff,0 -1.1px 0 #fff,.8px .8px 0 #fff,-.8px .8px 0 #fff,.8px -.8px 0 #fff,-.8px -.8px 0 #fff;">テキスト</div>
<div class="t" style="left:459px;width:200px;text-align:center;top:72.7px;font-size:17px;line-height:20px;color:#c1272d;font-weight:900;white-space:nowrap;-webkit-text-stroke:.35px #c1272d;text-shadow:1.1px 0 0 #fff,-1.1px 0 0 #fff,0 1.1px 0 #fff,0 -1.1px 0 #fff,.8px .8px 0 #fff,-.8px .8px 0 #fff,.8px -.8px 0 #fff,-.8px -.8px 0 #fff;">ボックス</div>
<div class="t" style="left:459px;width:200px;text-align:center;top:92.6px;font-size:17px;line-height:20px;color:#c1272d;font-weight:900;white-space:nowrap;-webkit-text-stroke:.35px #c1272d;text-shadow:1.1px 0 0 #fff,-1.1px 0 0 #fff,0 1.1px 0 #fff,0 -1.1px 0 #fff,.8px .8px 0 #fff,-.8px .8px 0 #fff,.8px -.8px 0 #fff,-.8px -.8px 0 #fff;">のスタイル</div>
<div style="left:47.5px;top:415px;width:562.5px;height:24px;background:#2a2a2a;border-radius:12px;box-shadow:0 1px 9px rgba(0,0,0,.13);"></div>
<svg style="left:54.5px;top:421.5px;" width="11" height="11" viewBox="0 0 11 11"><circle cx="5.5" cy="5.5" r="4.4" stroke="#fff" stroke-width=".85" fill="none"/><path d="M5.5 4.9 V8" stroke="#fff" stroke-width="1"/><circle cx="5.5" cy="3.3" r=".65" fill="#fff"/></svg>
<div class="t" style="left:70.6px;top:421.93px;font-size:8.38px;line-height:11.73px;color:#fff;white-space:nowrap;">タップするとテキストボックスを追加できます。または、長押しして"入力を開始"をタップすると、ページ全体にテキストを追加できます。</div>
<div style="left:595px;top:422px;width:10px;height:10px;background:#444;border-radius:50%;"></div>
<svg style="left:597px;top:424px;" width="6" height="6" viewBox="0 0 6 6"><path d="M1 1 L5 5 M5 1 L1 5" stroke="#8e8e8e" stroke-width=".8"/></svg>
<div style="left:242.5px;top:451.3px;width:173.5px;height:2.8px;background:#151515;border-radius:1.5px;"></div>
<div style="left:1px;top:1px;width:657px;height:457px;box-shadow:inset 0 0 0 1.7px #3d3d3d;"></div>
<div style="left:0px;top:458px;width:659px;height:1px;background:#dcdcdc;"></div>
</div></body></html>
